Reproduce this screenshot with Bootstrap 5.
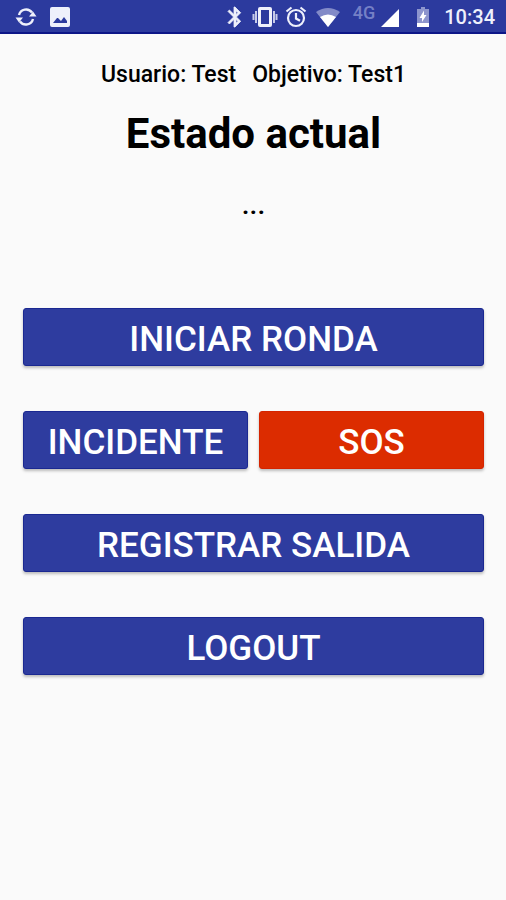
<!DOCTYPE html>
<html lang="es">
<head>
<meta charset="utf-8">
<meta name="viewport" content="width=device-width, initial-scale=1">
<title>Estado actual</title>
<link href="https://cdn.jsdelivr.net/npm/bootstrap@5.3.0/dist/css/bootstrap.min.css" rel="stylesheet">
<style>
  body { background: #fafafa; color: #000; font-family: Roboto, "Liberation Sans", sans-serif; }
  .status-bar { background: #2c3a9e; border-bottom: 2px solid #0c1687; height: 34px; padding: 2px 11px 0 14px; color: #eef0fb; }
  .status-bar svg { display: block; fill: currentColor; }
  .status-left { gap: 10px; }
  .status-right { gap: 5px; }
  .network { color: #7580c6; font-size: 18px; line-height: 18px; font-weight: 500; padding: 0 0 8px 5px; }
  .battery { margin-left: 6px; }
  .clock { font-size: 20px; line-height: 24px; font-weight: 500; padding-left: 4px; }
  .screen { padding: 26px 22px 24px 23px; }
  .session { font-size: 23px; line-height: 30px; font-weight: 500; gap: 16px; }
  .screen-title { font-size: 42px; line-height: 50px; font-weight: 700; margin-top: 19px; }
  .state { font-size: 28px; line-height: 34px; font-weight: 500; margin-top: 29px; }
  .actions { margin-top: 86px; gap: 45px; }
  .action-pair { gap: 11px; }
  .action { --bs-btn-color: #fff; --bs-btn-bg: #2e3c9f; --bs-btn-border-color: #1a2891; --bs-btn-hover-color: #fff; --bs-btn-hover-bg: #26338c; --bs-btn-hover-border-color: #1a2891; --bs-btn-active-color: #fff; --bs-btn-active-bg: #1f2b7c; --bs-btn-font-size: 35px; --bs-btn-font-weight: 500; --bs-btn-border-radius: 3px; padding: 11px 4px 5px; line-height: 40px; box-shadow: 0 2px 3px rgba(0, 0, 0, .25); }
  .action-sos { --bs-btn-bg: #dc2c00; --bs-btn-border-color: #d52400; --bs-btn-hover-bg: #c52700; --bs-btn-hover-border-color: #b82400; --bs-btn-active-bg: #ad2200; }
</style>
<script src="https://cdn.jsdelivr.net/npm/bootstrap@5.3.0/dist/js/bootstrap.bundle.min.js"></script>
</head>
<body>
<header class="status-bar d-flex align-items-center justify-content-between">
  <div class="status-left d-flex align-items-center">
    <svg width="24" height="24" viewBox="0 0 24 24" aria-hidden="true"><g fill="none" stroke="currentColor" stroke-width="2.4"><path d="M5 10a7.3 7.3 0 0 1 13-2.5M19 14a7.3 7.3 0 0 1-13 2.5"/></g><path d="M15 11.500h7.500L19 6.500zM1.500 12.500H9L5 17.500z"/></svg>
    <svg width="24" height="24" viewBox="0 0 24 24" aria-hidden="true"><path fill-rule="evenodd" d="M4 2h16q2 0 2 2v16q0 2-2 2H4q-2 0-2-2V4q0-2 2-2zM5 18h14v-2l-3-4-3 4-3-3-1 0z"/></svg>
  </div>
  <div class="status-right d-flex align-items-center">
    <svg width="22" height="24" viewBox="1 0 22 24" aria-hidden="true"><path d="M17.710 7.710 12 2h-1v7.590L6.410 5 5 6.410 10.590 12 5 17.590 6.410 19 11 14.410V22h1l5.710-5.710-4.300-4.290zM13 5.830l1.880 1.880L13 9.590zm1.880 10.460L13 18.170v-3.760z" stroke="currentColor" stroke-width=".8"/></svg>
    <svg width="28" height="24" viewBox="-1 0 28 24" aria-hidden="true"><path fill-rule="evenodd" d="M8 2h10q2 0 2 2v16q0 2-2 2H8q-2 0-2-2V4q0-2 2-2zM9 5v14h8V5z"/><path d="M3 6h2v12H3zM.5 9h2v6h-2zM21 6h2v12h-2zM23.500 9h2v6h-2z" opacity=".8"/></svg>
    <svg width="24" height="24" viewBox="0 0 24 24" aria-hidden="true"><g fill="none" stroke="currentColor" stroke-width="2.200"><circle cx="12" cy="13" r="8"/><path d="M12 8v5.500l4 2.300M2.500 6.500 7.500 2.500M21.500 6.500l-5-4"/></g></svg>
    <svg width="30" height="24" viewBox="0 0 30 24" aria-hidden="true"><path d="M3 7Q15-1 27 7L15 22z" opacity=".45"/><path d="M7 12q8-5 16 0l-8 10z" fill="#fff"/></svg>
    <span class="network">4G</span>
    <svg width="20" height="24" viewBox="0 0 20 24" aria-hidden="true"><path d="M1 22 19 4v18z" fill="#fff"/></svg>
    <svg class="battery" width="24" height="24" viewBox="0 0 24 24" aria-hidden="true"><path d="M10 2h4v2h4v14H6V4h4z" opacity=".5"/><path d="M6 18h12v4H6zM13 5.500 8.500 13H11v4l4.500-7H13z" fill="#fff"/></svg>
    <time class="clock" datetime="10:34">10:34</time>
  </div>
</header>
<main class="screen text-center">
  <div class="session d-flex flex-wrap justify-content-center"><span>Usuario: Test</span><span>Objetivo: Test1</span></div>
  <h1 class="screen-title mb-0">Estado actual</h1>
  <p class="state mb-0">...</p>
  <div class="actions d-flex flex-column">
    <button type="button" class="btn action w-100">INICIAR RONDA</button>
    <div class="action-pair d-flex">
      <button type="button" class="btn action w-100">INCIDENTE</button>
      <button type="button" class="btn action action-sos w-100">SOS</button>
    </div>
    <button type="button" class="btn action w-100">REGISTRAR SALIDA</button>
    <button type="button" class="btn action w-100">LOGOUT</button>
  </div>
</main>
</body>
</html>
